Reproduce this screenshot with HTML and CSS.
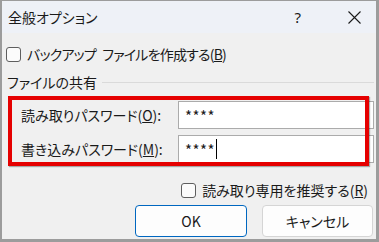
FILE: index.html
```html
<!DOCTYPE html>
<html lang="ja">
<head>
    <meta charset="UTF-8">
    <title>全般オプション</title>
    <link rel="stylesheet" href="styles.css">
</head>
<body>
    <div class="dialog">
        <div class="titlebar">
            <span class="title">全般オプション</span>
            <span class="help">?</span>
            <svg class="close" width="13" height="13" viewBox="0 0 13 13">
                <path d="M0.5 0.5 L12.5 12.5 M12.5 0.5 L0.5 12.5" stroke="#1a1a1a" stroke-width="1.1" fill="none"/>
            </svg>
        </div>

        <div class="content">
            <label class="check-row backup">
                <span class="box"></span>
                <span class="backup-text">バックアップ<span class="word-gap"> </span>ファイルを作成する(<u>B</u>)</span>
            </label>

            <div class="group-head">
                <span>ファイルの共有</span>
                <span class="line"></span>
            </div>

            <div class="pw-row first">
                <span class="pw-label">読み取りパスワード(<u>O</u>):</span>
                <div class="pw-input">****</div>
            </div>
            <div class="pw-row">
                <span class="pw-label">書き込みパスワード(<u>M</u>):</span>
                <div class="pw-input">****<span class="caret"></span></div>
            </div>

            <label class="check-row readonly">
                <span class="box"></span>
                <span>読み取り専用を推奨する(<u>R</u>)</span>
            </label>

            <div class="buttons">
                <button class="btn ok">OK</button>
                <button class="btn cancel">キャンセル</button>
            </div>
        </div>

        <div class="highlight"></div>
    </div>
</body>
</html>
```

FILE: styles.css
```css
body {
    margin: 0;
    font-family: "Noto Sans CJK JP", sans-serif;
    font-feature-settings: "palt";
    color: #1a1a1a;
    font-size: 14px;
}
.dialog {
    position: relative;
    width: 379px;
    height: 242px;
    box-sizing: border-box;
    background-color: #f0f0f0;
    border-style: solid;
    border-color: #9c9c9c;
    border-width: 1px 3px 3px 2px;
}
.titlebar {
    height: 32px;
    display: flex;
    align-items: center;
    background-color: #eef1f7;
    padding-left: 6px;
}
.title {
    flex: 1;
}
.help {
    margin-right: 47px;
    font-family: "Noto Sans", sans-serif;
    font-size: 15px;
}
.close {
    margin-right: 15px;
}
.content {
    padding: 0 2px 0 5px;
}
.check-row {
    display: flex;
    align-items: center;
    height: 20px;
}
.box {
    width: 15px;
    height: 15px;
    box-sizing: border-box;
    border: 1px solid #5e5e5e;
    border-radius: 3px;
    background-color: #fbfbfb;
    margin-right: 6px;
}
.backup {
    margin-top: 11px;
    margin-left: -1px;
}
.backup-text {
    letter-spacing: -0.8px;
}
.word-gap {
    margin-left: 4px;
}
.group-head {
    display: flex;
    align-items: center;
    height: 20px;
    margin-top: 8px;
}
.group-head .line {
    flex: 1;
    height: 1px;
    background-color: #dadada;
    margin-left: 5px;
}
.pw-row {
    display: flex;
    align-items: center;
    margin-top: 6px;
}
.pw-row.first {
    margin-top: 9px;
}
.pw-label {
    width: 171px;
    padding-left: 14px;
    box-sizing: border-box;
}
.pw-input {
    flex: 1;
    height: 28px;
    box-sizing: border-box;
    border: 1px solid #ababab;
    background-color: #fff;
    padding-left: 6px;
    display: flex;
    align-items: center;
    font-size: 15px;
    letter-spacing: 0.5px;
}
.caret {
    display: inline-block;
    width: 1px;
    height: 20px;
    background-color: #000;
    margin-left: 1px;
}
.readonly {
    justify-content: flex-end;
    margin-top: 17px;
    margin-right: 6px;
}
.buttons {
    display: flex;
    justify-content: flex-end;
    gap: 15px;
    margin-top: 5px;
    margin-right: 1px;
}
.btn {
    height: 32px;
    font-family: "Noto Sans CJK JP", sans-serif;
    font-feature-settings: "palt";
    font-size: 14px;
    color: #1a1a1a;
    background-color: #fdfdfd;
    border: 1px solid #d5d5d5;
    border-radius: 4px;
    padding: 0;
}
.ok {
    width: 112px;
    border-color: #0067c0;
}
.cancel {
    width: 111px;
}
.highlight {
    position: absolute;
    left: 6px;
    top: 95px;
    width: 361px;
    height: 70px;
    box-sizing: border-box;
    border: 4px solid #e50000;
    box-shadow: 1px 1px 1px rgba(0, 0, 0, 0.3);
}
```
